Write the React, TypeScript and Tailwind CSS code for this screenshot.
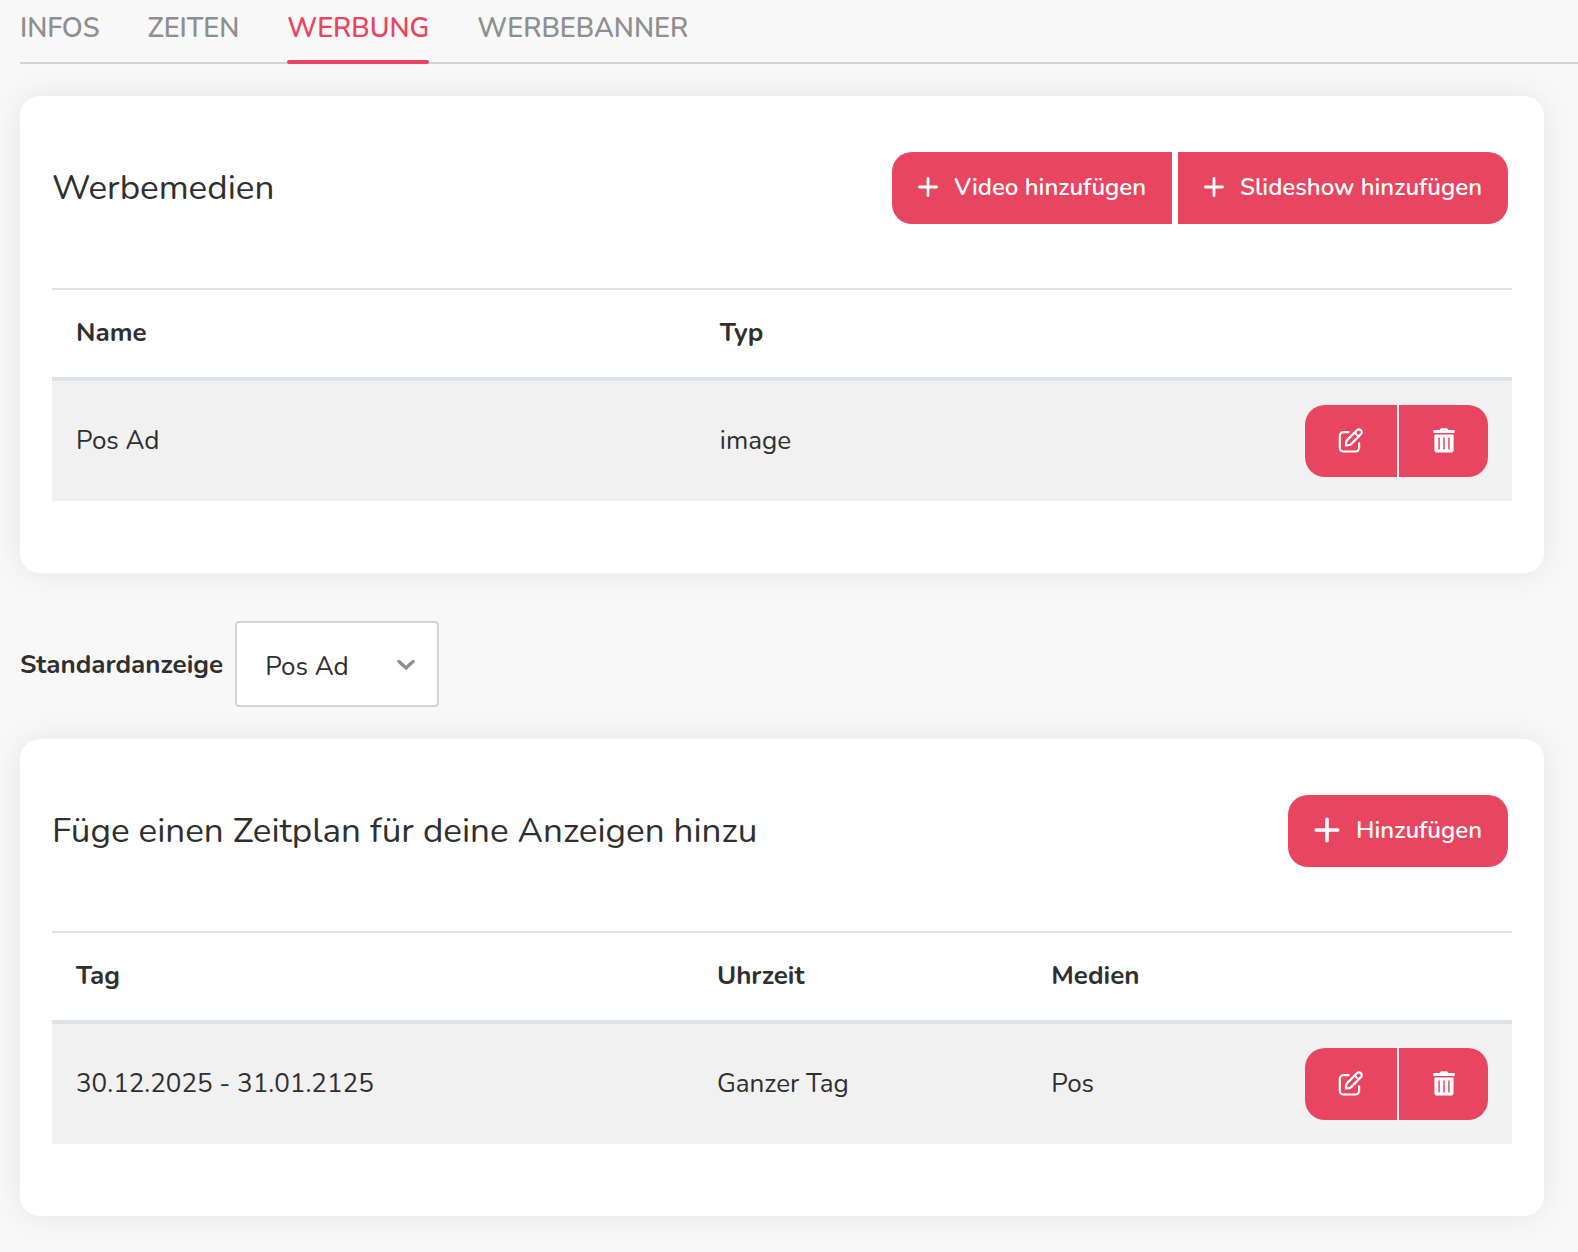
import { useState } from "react";
import type { ReactNode } from "react";

const TABS = ["INFOS", "ZEITEN", "WERBUNG", "WERBEBANNER"];

function PlusIcon({ large = false }: { large?: boolean }) {
  return large ? (
    <svg width="26" height="26" viewBox="0 0 26 26" fill="none" stroke="currentColor" strokeWidth="3.6" strokeLinecap="round" aria-hidden="true">
      <path d="M13 2.2v21.6M2.2 13h21.6" />
    </svg>
  ) : (
    <svg width="20" height="20" viewBox="0 0 20 20" fill="none" stroke="currentColor" strokeWidth="2.8" strokeLinecap="round" aria-hidden="true">
      <path d="M10 1.4v17.2M1.4 10h17.2" />
    </svg>
  );
}

function EditIcon() {
  return (
    <svg width="26" height="26" viewBox="0 0 26 26" fill="none" stroke="currentColor" strokeWidth="2.2" strokeLinecap="round" strokeLinejoin="round" aria-hidden="true">
      <path d="M10.600 4.100H5.500a3.700 3.700 0 0 0-3.700 3.700v12a3.700 3.700 0 0 0 3.700 3.700h11.900a3.700 3.700 0 0 0 3.700-3.700v-4.500" />
      <path d="M7.900 17.500 8.200 14a3 3 0 0 1 .9-1.900L18.900 2.300a2.800 2.800 0 0 1 4 4L13.100 16.100a3 3 0 0 1-1.900.9z" />
      <path d="M17.600 4a3.300 3.300 0 0 0 3.600 3.600" strokeWidth="1.8" />
    </svg>
  );
}

function TrashIcon() {
  return (
    <svg width="22" height="26" viewBox="0 0 22 26" fill="currentColor" aria-hidden="true">
      <path d="M1 2h5.600l.7-1a1.600 1.600 0 0 1 1.300-.7h4.800a1.600 1.600 0 0 1 1.300.7l.7 1H21a.8.8 0 0 1 .8.8v1.400a.8.8 0 0 1-.8.8H1a.8.8 0 0 1-.8-.8V2.800a.8.8 0 0 1 .8-.8z" />
      <path
        fillRule="evenodd"
        d="M1.400 6.500h19.200V21.700a2.800 2.800 0 0 1-2.800 2.800H4.200a2.800 2.800 0 0 1-2.800-2.800zM5.300 9.500v12h1.500V9.500zM10.250 9.500v12h1.500V9.500zM15.200 9.500v12h1.500V9.500z"
      />
    </svg>
  );
}

function AddButton({ children, large, shape }: { children: ReactNode; large?: boolean; shape: string }) {
  return (
    <button
      type="button"
      className={`flex h-[72px] items-center gap-4 bg-[#e84660] px-[26px] pb-[2px] text-2xl font-semibold whitespace-nowrap text-white hover:bg-[#d93a55] ${shape}`}
    >
      <PlusIcon large={large} />
      <span>{children}</span>
    </button>
  );
}

function RowActions() {
  return (
    <div className="flex justify-end gap-[2px] text-white">
      <button type="button" aria-label="Bearbeiten" className="flex h-[72px] w-[92px] items-center justify-center rounded-l-[20px] bg-[#e84660] hover:bg-[#d93a55]">
        <EditIcon />
      </button>
      <button type="button" aria-label="Löschen" className="flex h-[72px] w-[89px] items-center justify-center rounded-r-[20px] bg-[#e84660] hover:bg-[#d93a55]">
        <TrashIcon />
      </button>
    </div>
  );
}

function Card({ title, actions, children }: { title: string; actions: ReactNode; children: ReactNode }) {
  return (
    <section className="mr-[34px] rounded-[20px] bg-white px-8 pt-14 pb-[72px] shadow-[0_0_32px_rgba(0,0,0,0.08)]">
      <header className="mb-16 flex items-center justify-between pr-1">
        <h2 className="text-[35px] leading-[42px]">{title}</h2>
        <div className="flex gap-[6px]">{actions}</div>
      </header>
      {children}
    </section>
  );
}

type Column = { label: string; width: string };

function DataTable({ columns, rows }: { columns: Column[]; rows: string[][] }) {
  return (
    <table className="w-full table-fixed border-separate border-spacing-0 text-left">
      <thead>
        <tr>
          {columns.map((c) => (
            <th key={c.label} scope="col" className={`border-t-2 border-b-4 border-[#dee2e6] px-6 pt-[23px] pb-[25px] font-bold ${c.width}`}>
              {c.label}
            </th>
          ))}
          <td className="border-t-2 border-b-4 border-[#dee2e6]" />
        </tr>
      </thead>
      <tbody>
        {rows.map((row) => (
          <tr key={row[0]} className="bg-[#f1f1f1]">
            {row.map((cell) => (
              <td key={cell} className="px-6 pb-[2px]">
                {cell}
              </td>
            ))}
            <td className="p-6">
              <RowActions />
            </td>
          </tr>
        ))}
      </tbody>
    </table>
  );
}

export default function App() {
  const [active, setActive] = useState("WERBUNG");

  return (
    <div className="min-h-screen bg-[#f8f8f8] pb-9 pl-5 font-[Nunito,'Open_Sans',sans-serif] text-[26px] leading-[39px] text-[#2f2f2f]">
      <nav className="mb-8 flex h-16 gap-12 border-b-2 border-[#d5d5d5]">
        {TABS.map((tab) => (
          <a
            key={tab}
            href={`#${tab.toLowerCase()}`}
            aria-current={tab === active ? "page" : undefined}
            onClick={() => setActive(tab)}
            className={
              tab === active
                ? "relative h-16 pt-[9px] text-[27px] font-semibold text-[#e84660] after:absolute after:inset-x-0 after:bottom-0 after:h-1 after:rounded-sm after:bg-[#e84660]"
                : "h-16 pt-[9px] text-[27px] font-semibold text-[#8f8f8f]"
            }
          >
            {tab}
          </a>
        ))}
      </nav>

      <main>
        <Card
          title="Werbemedien"
          actions={
            <>
              <AddButton shape="rounded-l-[20px]">Video hinzufügen</AddButton>
              <AddButton shape="rounded-r-[20px]">Slideshow hinzufügen</AddButton>
            </>
          }
        >
          <DataTable
            columns={[
              { label: "Name", width: "w-[44.1%]" },
              { label: "Typ", width: "w-[22.9%]" },
            ]}
            rows={[["Pos Ad", "image"]]}
          />
        </Card>

        <div className="mt-12 mb-8 flex items-center gap-3">
          <label htmlFor="standard" className="font-bold">
            Standardanzeige
          </label>
          <div className="relative">
            <select
              id="standard"
              className="h-[86px] w-[204px] appearance-none rounded-[4px] border-2 border-[#d5d5d5] bg-white pt-1 pr-14 pl-7 text-[26px]"
            >
              <option>Pos Ad</option>
            </select>
            <svg
              className="pointer-events-none absolute top-[38px] right-6"
              width="18"
              height="12"
              viewBox="0 0 18 12"
              fill="none"
              stroke="#8f8f8f"
              strokeWidth="3.4"
              strokeLinecap="round"
              strokeLinejoin="round"
              aria-hidden="true"
            >
              <path d="m2 2.500 7 6.500 7-6.500" />
            </svg>
          </div>
        </div>

        <Card
          title="Füge einen Zeitplan für deine Anzeigen hinzu"
          actions={
            <AddButton large shape="rounded-[20px]">
              Hinzufügen
            </AddButton>
          }
        >
          <DataTable
            columns={[
              { label: "Tag", width: "w-[43.9%]" },
              { label: "Uhrzeit", width: "w-[22.9%]" },
              { label: "Medien", width: "w-[16%]" },
            ]}
            rows={[["30.12.2025 - 31.01.2125", "Ganzer Tag", "Pos"]]}
          />
        </Card>
      </main>
    </div>
  );
}
